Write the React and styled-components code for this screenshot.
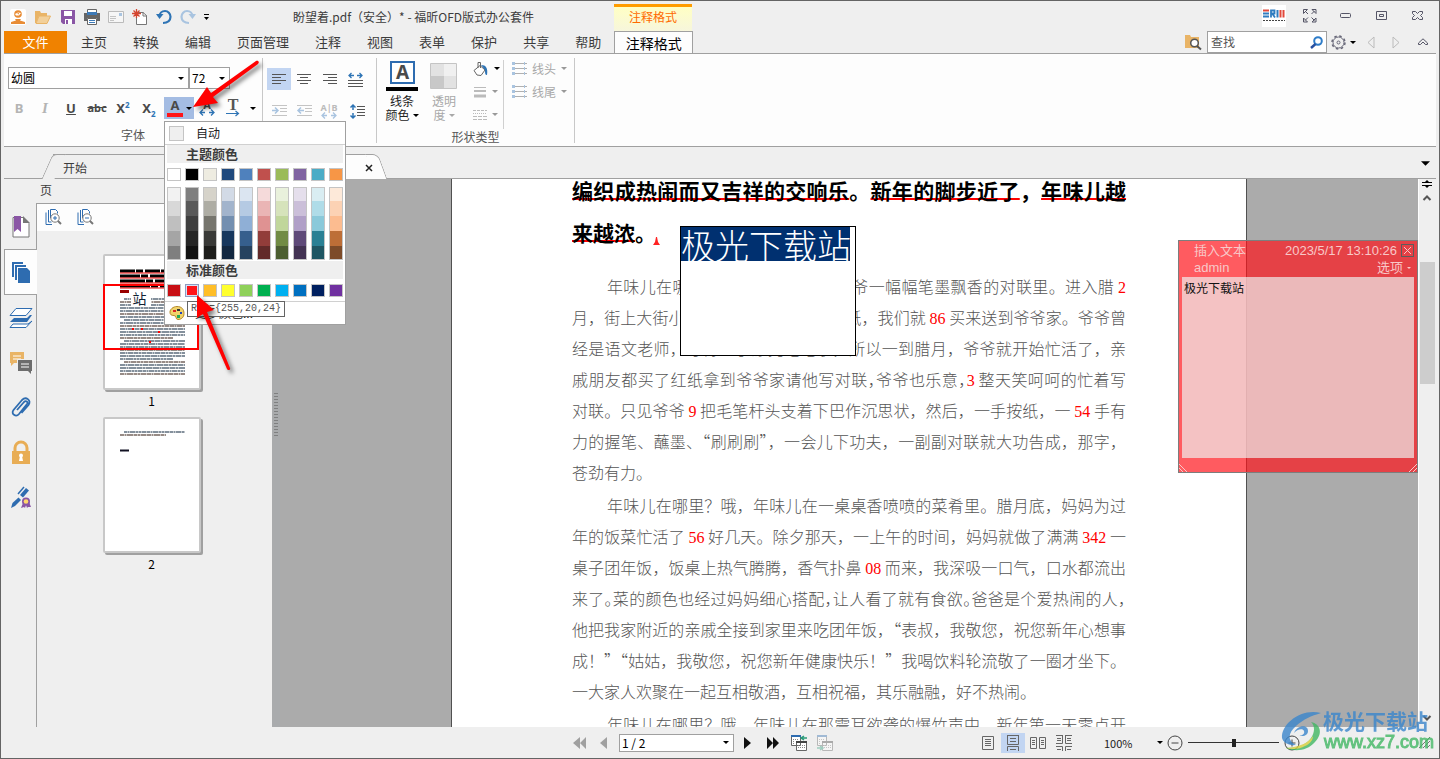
import React from "react";
import styled, { createGlobalStyle } from "styled-components";

const GlobalStyle = createGlobalStyle`
  * { box-sizing: border-box; }
  html, body { margin: 0; padding: 0; }
  body {
    font-family: "Noto Sans CJK SC", "Liberation Sans", sans-serif;
    font-size: 12px;
    line-height: 16px;
    color: #3c3c3c;
    background: #efefef;
    overflow: hidden;
  }
  button, input, select {
    font: inherit;
    color: inherit;
    margin: 0;
    padding: 0;
    border: none;
    border-radius: 0;
    background: none;
    outline: none;
  }
  svg { display: block; flex: none; overflow: visible; }
`;

/* ---------- window ---------- */

const Window = styled.div`
  position: relative;
  display: flex;
  flex-direction: column;
  height: 100vh;
  padding: 0 3px;
  border: 1px solid #646464;
  background: #efefef;
`;

const TitleBar = styled.header`
  display: flex;
  align-items: center;
  height: 30px;
`;

const QuickAccess = styled.div`
  display: flex;
  align-items: center;
  flex: 0 0 289px;
  padding: 2px 0 0 2px;
`;

const IconButton = styled.button`
  display: flex;
  align-items: center;
  justify-content: center;
  gap: 4px;
  width: ${(p) => p.$w || 24}px;
  height: ${(p) => p.$h || 22}px;
  background: ${(p) => (p.$on ? "#c2d5f2" : "none")};
`;

const Title = styled.h1`
  flex: 0 0 321px;
  margin: 0;
  padding-top: 2px;
  font-size: 12px;
  font-weight: 400;
  white-space: nowrap;
`;

const ContextTitle = styled.div`
  align-self: flex-end;
  width: 78px;
  height: 27px;
  border-top: 3px solid #ff9c00;
  background: linear-gradient(#ffffc4, #f7f6dc);
  color: #ff6a00;
  text-align: center;
  line-height: 20px;
`;

const Spacer = styled.div`
  flex: 1;
`;

const TabBar = styled.nav`
  display: flex;
  height: 22px;
`;

const FileTab = styled.button`
  width: 63px;
  margin-right: 1px;
  background: #f08200;
  color: #fff;
  font-size: 13px;
`;

const Tab = styled.button`
  padding: 0 13px;
  font-size: 13px;
`;

const ActiveTab = styled.button`
  position: relative;
  z-index: 1;
  width: 79px;
  height: 23px;
  border: 1px solid #a0a0a0;
  border-bottom: none;
  background: #fdfdfd;
  color: #000;
  font-size: 14px;
`;

const SearchBox = styled.div`
  display: flex;
  align-items: center;
  width: 120px;
  padding: 0 3px;
  border: 1px solid #a0a0a0;
  background: #fff;
`;

const SearchInput = styled.input`
  flex: 1;
  min-width: 0;
  &::placeholder { color: #555; opacity: 1; }
`;

/* ---------- ribbon ---------- */

const RibbonLift = styled.div`
  position: relative;
  z-index: 5;
`;

const Ribbon = styled.section`
  display: flex;
  height: 94px;
  padding: 4px 0 3px;
  border-top: 1px solid #a0a0a0;
  border-bottom: 1px solid #a0a0a0;
  background: #fdfdfd;
`;

const Group = styled.div`
  display: flex;
  flex-direction: column;
  width: ${(p) => p.$w}px;
  border-right: 1px solid #c8c8c8;
`;

const GroupLabel = styled.div`
  margin-top: auto;
  color: #555;
  text-align: center;
`;

const Row = styled.div`
  display: flex;
  align-items: ${(p) => p.$align || "center"};
  padding-left: ${(p) => p.$pad || 0}px;
  margin-top: ${(p) => p.$top || 0}px;
`;

const SelectWrap = styled.label`
  display: grid;
  align-items: center;
  width: ${(p) => p.$w}px;
  height: ${(p) => p.$h || 22}px;
  border: 1px solid #a0a0a0;
  background: #fff;
  color: #000;
  & > * { grid-area: 1 / 1; }
  & > svg { justify-self: end; margin-right: 4px; pointer-events: none; }
`;

const Select = styled.select`
  appearance: none;
  width: 100%;
  padding-left: 2px;
`;

const Letter = styled.button`
  width: 26px;
  height: 22px;
  color: ${(p) => (p.$off ? "#b4b4b4" : "#4a4a4a")};
  font-family: ${(p) => (p.$serif ? '"Liberation Serif", serif' : '"Noto Sans", sans-serif')};
  font-size: ${(p) => p.$size || 13}px;
  font-weight: 700;
  font-style: ${(p) => (p.$italic ? "italic" : "normal")};
  text-decoration: ${(p) => p.$line || "none"};
  sup, sub { font-size: 8px; line-height: 0; color: #2e74b5; }
`;

const ColorAnchor = styled.div`
  position: relative;
  width: 30px;
`;

const ColorButton = styled.button`
  display: flex;
  align-items: center;
  justify-content: center;
  gap: 3px;
  width: 30px;
  height: 22px;
  background: #a4bce3;
`;

const BigButton = styled.button`
  display: flex;
  flex-direction: column;
  align-items: center;
  width: 42px;
  color: ${(p) => (p.$off ? "#a8a8a8" : "#222")};
  line-height: 14px;
  svg { margin-bottom: 2px; }
  span { display: flex; align-items: center; gap: 3px; }
  span svg { margin: 0; }
`;

const SmallStack = styled.div`
  display: flex;
  flex-direction: column;
  width: ${(p) => p.$w}px;
  border-right: ${(p) => (p.$line ? "1px solid #d0d0d0" : "none")};
`;

const SmallButton = styled.button`
  display: flex;
  align-items: center;
  gap: 5px;
  height: 23px;
  padding: 0 0 6px 8px;
  color: #a8a8a8;
`;

/* ---------- colour menu ---------- */

const Menu = styled.div`
  position: absolute;
  top: 24px;
  left: 0;
  width: 182px;
  border: 1px solid #a0a0a0;
  background: #fff;
`;

const AutoRow = styled.button`
  display: flex;
  align-items: center;
  width: 100%;
  height: 23px;
  padding-left: 4px;
  border-bottom: 1px solid #d0d0d0;
  color: #222;
  gap: 12px;
`;

const MenuHead = styled.div`
  margin: 0 2px;
  padding-left: 19px;
  background: #efefef;
  font-size: 13px;
  font-weight: 700;
  line-height: 18px;
`;

const Swatches = styled.div`
  display: flex;
  gap: 4px;
  padding: ${(p) => p.$pad || "5px 2px 4px"};
`;

const Swatch = styled.button`
  width: ${(p) => p.$w || 14}px;
  height: ${(p) => p.$h || 13}px;
  border: 1px solid ${(p) => (p.$on ? "#8e9cc0" : "#c4c4c4")};
  box-shadow: ${(p) => (p.$on ? "inset 0 0 0 1px #d6e2f6" : "none")};
  background: ${(p) => p.$c};
`;

const Shades = styled.div`
  display: flex;
  flex-direction: column;
  width: 14px;
  border: 1px solid #c4c4c4;
`;

const Shade = styled.button`
  height: ${(p) => (p.$edge ? 13 : 15)}px;
  background: ${(p) => p.$c};
`;

const MoreRow = styled.button`
  display: flex;
  align-items: center;
  gap: 10px;
  width: 100%;
  height: 23px;
  padding-left: 4px;
  border-top: 1px solid #d0d0d0;
  color: #222;
`;

const Tooltip = styled.div`
  position: absolute;
  top: 179px;
  left: 22px;
  width: 98px;
  height: 16px;
  padding-left: 3px;
  border: 1px solid #646464;
  background: #fff;
  color: #555;
  font-family: "Liberation Mono", monospace;
  font-size: 10px;
  line-height: 14px;
  white-space: nowrap;
`;

/* ---------- document tabs ---------- */

const DocTabs = styled.div`
  display: flex;
  align-items: flex-end;
  height: 32px;
  padding-left: 49px;
  border-bottom: 1px solid #a0a0a0;
`;

const DocTab = styled.div`
  position: relative;
  display: flex;
  align-items: center;
  justify-content: space-between;
  width: ${(p) => p.$w}px;
  height: ${(p) => (p.$on ? 25 : 24)}px;
  margin-bottom: ${(p) => (p.$on ? -1 : 0)}px;
  padding: 2px 0 0 10px;
  border-top: 1px solid #a0a0a0;
  border-radius: 0 8px 0 0;
  background: ${(p) => (p.$on ? "#fdfdfd" : "#efefef")};
  &::before {
    content: "";
    position: absolute;
    top: -1px;
    left: -6px;
    width: 12px;
    height: 24px;
    border-top: 1px solid #a0a0a0;
    border-left: 1px solid #a0a0a0;
    border-radius: 5px 0 0 0;
    background: inherit;
    transform: skewX(-24deg);
  }
  &::after {
    content: "";
    position: absolute;
    top: -1px;
    right: -4px;
    width: 12px;
    height: ${(p) => (p.$on ? 25 : 24)}px;
    border-top: 1px solid #a0a0a0;
    border-right: 1px solid #a0a0a0;
    border-radius: 0 6px 0 0;
    background: inherit;
    transform: skewX(20deg);
  }
  & > * { position: relative; z-index: 1; }
`;

/* ---------- main area ---------- */

const Main = styled.main`
  display: flex;
  flex: 1;
  min-height: 0;
`;

const Rail = styled.nav`
  display: flex;
  flex-direction: column;
  width: 33px;
  padding-top: 25px;
`;

const RailButton = styled.button`
  position: relative;
  display: flex;
  align-items: center;
  justify-content: center;
  width: 33px;
  height: ${(p) => (p.$on ? 46 : 45)}px;
  border: 1px solid ${(p) => (p.$on ? "#a0a0a0" : "transparent")};
  border-right: none;
  background: ${(p) => (p.$on ? "#fdfdfd" : "none")};
`;

const Panel = styled.aside`
  display: flex;
  flex-direction: column;
  width: 235px;
`;

const PanelTitle = styled.div`
  height: 24px;
  padding: 3px 0 0 3px;
`;

const PanelBody = styled.div`
  flex: 1;
  margin-left: -1px;
  border-top: 1px solid #a0a0a0;
  border-left: 1px solid #a0a0a0;
`;

const PanelTools = styled.div`
  display: flex;
  gap: 8px;
  height: 27px;
  padding-left: 4px;
  background: #fdfdfd;
`;

const Thumbs = styled.div`
  display: flex;
  flex-direction: column;
  align-items: center;
  padding: 23px 6px 0 0;
`;

const Thumb = styled.figure`
  display: flex;
  flex-direction: column;
  align-items: center;
  height: 163px;
  margin: 0;
`;

const Sheet = styled.div`
  position: relative;
  width: 98px;
  height: 136px;
  border: 2px solid #c8c8c8;
  border-radius: 2px;
  background: #fff;
  box-shadow: 2px 2px 0 #a0a0a0;
`;

const SheetMark = styled.span`
  position: absolute;
  top: 33px;
  left: 26px;
  padding: 1px 4px 1px 2px;
  background: #fff;
  color: #123;
  font-size: 14px;
`;

const SheetView = styled.span`
  position: absolute;
  top: 28px;
  left: -2px;
  width: 96px;
  height: 66px;
  border: 2px solid #f00;
`;

const Caption = styled.figcaption`
  margin-top: 3px;
  color: #000;
`;

const Splitter = styled.div`
  display: flex;
  align-items: center;
  justify-content: center;
  width: 8px;
  padding-bottom: 76px;
  background: #a9abad;
`;

const Canvas = styled.div`
  position: relative;
  display: flex;
  justify-content: center;
  flex: 1;
  min-width: 0;
  overflow: hidden;
  background: #ababab;
`;

const Page = styled.article`
  flex: none;
  width: 796px;
  padding: 0 120px;
  border-left: 1px solid #505050;
  border-right: 1px solid #505050;
  background: #fff;
`;

const Heading = styled.h2`
  margin: -10px 0 18px;
  color: #000;
  font-size: 21px;
  font-weight: 700;
  line-height: 42px;
`;

const Para = styled.p`
  margin: 0 0 2px;
  color: #555;
  font-weight: 300;
  font-size: 16px;
  line-height: 31px;
`;

const Line = styled.span`
  display: block;
  height: ${(p) => (p.$head ? 42 : 31)}px;
  padding-left: ${(p) => (p.$first ? 35 : 0)}px;
  font-feature-settings: ${(p) => (p.$tight ? '"halt"' : "normal")};
  text-align: ${(p) => (p.$last ? "left" : "justify")};
  text-align-last: ${(p) => (p.$last ? "left" : "justify")};
`;

const Under = styled.u`
  text-decoration: underline #f00 2px;
  text-decoration-skip-ink: none;
  text-underline-offset: -1px;
`;

const Num = styled.b`
  color: #f00;
  font-family: "Liberation Serif", serif;
  font-weight: 400;
`;

const Caret = styled.svg`
  display: inline-block;
  margin-left: -3px;
  vertical-align: -4px;
`;

const TextBox = styled.div`
  position: absolute;
  top: 47px;
  left: 400px;
  width: 176px;
  height: 130px;
  border: 1px solid #000;
  background: #fff;
`;

const TextBoxInput = styled.input`
  display: block;
  width: 169px;
  height: 34px;
  background: #003070;
  color: #fff;
  font-size: 34px;
  font-weight: 300;
  line-height: 34px;
`;

const Note = styled.section`
  position: absolute;
  top: 61px;
  right: 0;
  display: flex;
  flex-direction: column;
  width: 240px;
  height: 233px;
  padding: 1px 3px 0;
  border: 1px solid #7d7d7d;
  background: rgba(255, 18, 24, 0.69);
  color: #f8c8c8;
`;

const NoteHead = styled.div`
  display: flex;
  align-items: center;
  justify-content: space-between;
  height: 17px;
  padding-left: 12px;
  font-family: "Liberation Sans", "Noto Sans CJK SC", sans-serif;
  font-size: 13px;
`;

const NoteMeta = styled.span`
  display: flex;
  align-items: center;
  gap: 4px;
  padding-right: ${(p) => p.$pad || 0}px;
`;

const NoteClose = styled.button`
  display: flex;
  align-items: center;
  justify-content: center;
  width: 13px;
  height: 13px;
  border: 1px solid #5c5c5c;
`;

const NoteText = styled.div`
  flex: 1;
  margin: 1px 0 0;
  padding: 3px 2px;
  background: rgba(238, 248, 246, 0.66);
  color: #111;
`;

const NoteFoot = styled.div`
  display: flex;
  align-items: flex-end;
  justify-content: space-between;
  height: 14px;
  margin: 0 -3px;
`;

const ScrollBar = styled.div`
  display: flex;
  flex-direction: column;
  align-items: center;
  width: 18px;
  padding-right: 1px;
  border-left: 1px solid #fdfdfd;
`;

const ScrollThumb = styled.div`
  width: 15px;
  height: 122px;
  margin: 54px 0 auto;
  background: #cdcdcd;
`;

/* ---------- status bar ---------- */

const StatusBar = styled.footer`
  display: flex;
  align-items: center;
  height: 31px;
  color: #222;
`;

const StatusLeft = styled.div`
  display: flex;
  align-items: center;
  padding-left: 563px;
`;

const Zoom = styled.input.attrs({ type: "range" })`
  appearance: none;
  width: 91px;
  height: 16px;
  margin: 0 4px;
  background: linear-gradient(#333, #333) center / 100% 1px no-repeat;
  &::-webkit-slider-thumb {
    appearance: none;
    width: 4px;
    height: 8px;
    background: #222;
  }
`;

const Percent = styled.span`
  width: 50px;
  font-size: 11px;
`;

/* ---------- overlays ---------- */

const Pointer = styled.svg`
  position: absolute;
  z-index: 8;
  top: ${(p) => p.$y}px;
  left: ${(p) => p.$x}px;
  pointer-events: none;
  filter: drop-shadow(3px 3px 2px rgba(0, 0, 0, 0.5));
`;

const Brand = styled.div`
  position: absolute;
  z-index: 9;
  right: 5px;
  bottom: 5px;
  display: flex;
  align-items: center;
  opacity: 0.8;
  pointer-events: none;
`;

const BrandName = styled.div`
  color: #3a86cc;
  font-size: 21px;
  font-weight: 700;
  line-height: 22px;
  small {
    display: block;
    padding-left: 1px;
    color: #41b763;
    font-family: "Liberation Sans", sans-serif;
    font-size: 18px;
    font-weight: 400;
    -webkit-text-stroke: 1px #41b763;
  }
`;

/* ---------- small drawings ---------- */

const Down = ({ c = "#000", w = 6 }) => (
  <svg width={w} height={Math.ceil(w / 2)} viewBox="0 0 6 3" fill={c}><path d="M0 0h6L3 3z" /></svg>
);

const S = ({ w = 16, h, box, children, ...rest }) => (
  <svg width={w} height={h || w} viewBox={box || `0 0 ${w} ${h || w}`} fill="none" {...rest}>{children}</svg>
);

const AppIcon = () => (
  <S><rect width="16" height="16" rx="2" fill="#fff" />
    <circle cx="8" cy="5" r="3.800" fill="#e88c35" />
    <path d="M5 5l3-1.500 3 .500-2 2.500H6z" fill="#fff" />
    <path d="M7 4.500l2-.500v1.500z" fill="#e88c35" />
    <path d="M5 10h6l-1 1.500 5 1.500V15H1v-2l5-1.500z" fill="#e88c35" /></S>
);
const OpenIcon = () => (
  <S><path d="M0 2h5l1 2h6v3H4L1 14H0z" fill="#e9b466" /><path d="M4 7h11.500L12 14.500H1z" fill="#f2d09a" stroke="#e9b466" /></S>
);
const SaveIcon = () => (
  <S w={15}><path d="M0 0h14v14H2l-2-2z" fill="#8a56a5" /><path d="M3 1h8v5H3zM4 9h7v5H4z" fill="#fff" /><path d="M5 10h2v4H5z" fill="#8a56a5" /></S>
);
const PrintIcon = () => (
  <S><path d="M3.500 4V.500h9V4" stroke="#666" fill="#fff" /><path d="M0 4h16v8h-3V9H3v3H0z" fill="#666" /><path d="M3 3h10v3H3z" fill="#3d7ab8" /><path d="M3.500 9.500h9v6h-9z" fill="#fff" stroke="#666" /><path d="M5 11.500h6M5 13.500h6" stroke="#3d7ab8" /></S>
);
const MailIcon = () => (
  <S h={12} box="0 0 16 12"><path d="M.500.500h15v11H.500z" stroke="#bbb" fill="#f6f6f6" /><path d="M2 5.500h6M2 7.500h6M2 9.500h4" stroke="#c4c4c4" /><path d="M11 2h3v3h-3z" fill="#a9c4e0" /></S>
);
const NewIcon = () => (
  <S><path d="M6 3.500h5l3.500 3V15.500h-10V9" stroke="#777" fill="#fff" /><path d="M11 3v4h4" stroke="#777" /><path d="M4.500 0v9M0 4.500h9M1.500 1.500l6 6M7.500 1.500l-6 6" stroke="#d5452f" strokeWidth="1.300" /></S>
);
const UndoIcon = ({ c = "#2e74b5", flip }) => (
  <S transform={flip ? "scale(-1 1)" : undefined}><path d="M3.500 7.500C3.500 4 6 2 9 2s5.500 2.500 5.500 5.800S12 14 7 14" stroke={c} strokeWidth="2.200" /><path d="M0 5h7.500L3.500 10z" fill={c} /></S>
);
const FullIcon = () => (
  <S w={14} stroke="#556"><path d="M.500.500h4L.500 4.500zM9 .500h4v4zM.500 9l4 4h-4zM13 9v4H9zM2 2l3 3M11.500 2l-3 3M2 11.500l3-3M11.500 11.500l-3-3" /></S>
);
const EriiiIcon = () => (
  <S w={24} h={22}><path d="M0 0h24v22H0z" fill="#fff" />
    <path d="M1 5.500h6" stroke="#e1483a" strokeWidth="2" /><path d="M1 8.500h6M1 11.500h6" stroke="#2f7cc0" strokeWidth="2" />
    <path d="M9 12.500v-7h3.500v3H9M10.500 9l2.500 3.500" stroke="#2f7cc0" strokeWidth="1.800" />
    <path d="M15.500 5v7.500" stroke="#2f7cc0" strokeWidth="2" /><path d="M18.500 5v7.500M21.500 5v7.500" stroke="#e1483a" strokeWidth="2" />
    <path d="M1 15.500h22" stroke="#444" strokeDasharray="2 1" /></S>
);
const Gear = () => (
  <S w={15}><circle cx="7.500" cy="7.500" r="5.500" stroke="#667" /><circle cx="7.500" cy="7.500" r="6.500" stroke="#667" strokeWidth="1.500" strokeDasharray="2.500 2.600" /><circle cx="7.500" cy="7.500" r="1.500" stroke="#667" /></S>
);

const alignLines = {
  left: [[0, 14], [0, 9], [0, 14], [0, 9]],
  center: [[0, 14], [3, 11], [0, 14], [3, 11]],
  right: [[0, 14], [5, 14], [0, 14], [5, 14]],
};
const AlignIcon = ({ kind }) => (
  <S w={14} h={12}>{alignLines[kind].map(([a, b], i) => <path key={i} d={`M${a} ${i * 3 + 1.5}H${b}`} stroke="#555" />)}</S>
);
const IndentIcon = ({ back }) => (
  <S w={15} h={12}><path d="M0 .500h15M8 3.500h7M8 6.500h7M0 10.500h15" stroke="#c4c4c4" />
    <path d={back ? "M7 5.500H1M4 2.500L1 5.500l3 3" : "M0 5.500h6M3 2.500l3 3-3 3"} stroke="#a9c4e0" strokeWidth="1.500" /></S>
);
const SpaceIcon = () => (
  <S w={15} h={15}><path d="M1 3.500h5M9 3.500h5M3.500 1L1 3.500 3.500 6M11.500 1L14 3.500 11.500 6" stroke="#2e74b5" strokeWidth="1.300" /><path d="M0 8.500h15M0 11.500h15M0 14.500h15" stroke="#555" /></S>
);
const LineHeightIcon = () => (
  <S w={15} h={15}><path d="M3 1v5M3 9v5M.500 3.500L3 1l2.500 2.500M.500 11.500L3 14l2.500-2.500" stroke="#2e74b5" strokeWidth="1.500" /><path d="M7 2.500h8M7 5.500h8M7 8.500h8M7 11.500h8" stroke="#555" /></S>
);
const Arrows = ({ c = "#2e74b5" }) => <path d="M1 13.500h5M10 13.500h5M4 10.500l-3 3 3 3M12 10.500l3 3-3 3" stroke={c} strokeWidth="1.300" />;
const svgText = { fontFamily: "Noto Sans", fontWeight: 700 };

const LetterSpace = () => (
  <S h={18}><text x="8" y="10" textAnchor="middle" fontSize="11" fill="#555" {...svgText}>A</text><Arrows /></S>
);
const ABIcon = () => (
  <S h={18}><text x="8" y="9" textAnchor="middle" fontSize="9" fill="#bbb" {...svgText}>A|B</text><Arrows c="#a9c4e0" /></S>
);
const TextDir = () => (
  <S h={18}><text x="7" y="11" textAnchor="middle" fontSize="16" fill="#555" fontFamily="Liberation Serif" fontWeight="700">T</text><path d="M0 14.500h12M9.500 12l3 2.500-3 2.500" stroke="#2e74b5" strokeWidth="1.200" /></S>
);
const LineColorIcon = () => (
  <S w={32} h={32}><path d="M5 2h23v21H5z" stroke="#2e6cb0" strokeWidth="2" fill="#fff" />
    <text x="16.500" y="19" textAnchor="middle" fontSize="19" fill="#4a4a4a" {...svgText}>A</text><path d="M0 27h32v4H0z" fill="#000" /></S>
);
const OpacityIcon = () => (
  <S w={28} h={32}><path d="M.500 3.500h26v25H.500z" fill="#f0f0f0" stroke="#c4c4c4" /><path d="M1 4h13v12H1zM14 16h12v12H14z" fill="#e2e2e2" /><path d="M1 16h13v12H1z" fill="#c8c8c8" /></S>
);
const BucketIcon = () => (
  <S><path d="M5 7V1.500h2.500V7M1 9.500l6-5 5 4.500-4 5.500-4-.500z" stroke="#666" fill="#fff" /><path d="M8 4c5 0 7 3 6 10-2 0-2-2-2-5z" fill="#2e74b5" /></S>
);
const WeightIcon = () => <S w={14} h={12}><path d="M1 1.500h12" stroke="#bbb" /><path d="M1 5h12" stroke="#bbb" strokeWidth="2" /><path d="M1 10h12" stroke="#bbb" strokeWidth="3" /></S>;
const DashIcon = () => <S w={14} h={12}><path d="M0 1.500h14" stroke="#bbb" strokeDasharray="3 1" /><path d="M0 4.500h14" stroke="#bbb" strokeDasharray="1 1" /><path d="M0 7.500h14M0 10.500h14" stroke="#bbb" strokeDasharray="4 1" /></S>;
const EndsIcon = () => (
  <S w={15} h={13}>{[1.5, 6.5, 11.5].map((y) => <React.Fragment key={y}><path d={`M2 ${y}H15`} stroke="#b0b0b0" /><path d={`M0 ${y - 1.5}h3v3H0z`} fill="#a9c4e0" /></React.Fragment>)}<path d="M12.500 0v3M12.500 5v3M12.500 10v3" stroke="#a9c4e0" /></S>
);

const BookmarkIcon = () => (
  <S w={18} h={22}><path d="M1 1.500h10l6 6V21H1z" fill="#fff" stroke="#777" /><path d="M11 0l7 7h-7z" fill="#777" /><path d="M2 0h7v16l-3.500-3L2 16z" fill="#8a56a5" /></S>
);
const PagesIcon = () => (
  <S w={20} h={22}><path d="M1 1h11v2H3v13H1z" fill="#2e6cb0" /><path d="M4 4h11v2H6v13H4z" fill="#2e6cb0" /><path d="M7 7h9l3 3v12H7z" fill="#2e6cb0" /></S>
);
const LayersIcon = () => (
  <S w={24} h={22}><path d="M7 1.500h16l-6 7H1z" fill="#fff" stroke="#2e6cb0" /><path d="M1 15l4-4h13l3-3h2l-5 7z" fill="#2e6cb0" /><path d="M4 17l-3 3.500h16l6-6.500-4 3z" fill="#fff" stroke="#2e6cb0" /></S>
);
const CommentsIcon = () => (
  <S w={22} h={22}><path d="M0 0h14v11H4l-3 3v-3H0z" fill="#e9b466" /><path d="M3 4h8M3 7h8" stroke="#fff" /><path d="M8 8h14v11h-1v3l-3-3H8z" fill="#6d6d6d" /><path d="M7.500 11V7.500H15" stroke="#efefef" /><path d="M11 12h8M11 15h8" stroke="#fff" /></S>
);
const ClipIcon = () => (
  <S w={20} h={21}><path d="M6 13l7-8c2-2 4.500 0 3 2L8 17c-3 3.500-8.500 0-5.500-4L11 3c4-4 9.500 0 6.500 5l-7 8" stroke="#2e6cb0" strokeWidth="1.800" /></S>
);
const LockIcon = () => (
  <S w={20} h={23}><path d="M4 10V7a6 6 0 0 1 12 0v3" stroke="#e8ad55" strokeWidth="3" /><path d="M1 10h18v13H1z" fill="#e8ad55" /><circle cx="10" cy="14.500" r="2" fill="#fff" /><path d="M9 15h2l1 5H8z" fill="#fff" /></S>
);
const SignIcon = () => (
  <S w={20} h={22}><path d="M0 21l1.500-5 6-5.500 2.500 2.500-6 6z" fill="#2e6cb0" /><path d="M9 8l6-7 3 2.500-6 7z" fill="#2e6cb0" /><path d="M7 7l6-7" stroke="#2e6cb0" strokeWidth="1.500" /><path d="M12 16l-2 5 3-1 1 1 1-3 1 3 1-1h3l-2-5z" fill="#8a56a5" /><circle cx="15" cy="14.500" r="4" fill="#8a56a5" /><circle cx="15" cy="14.500" r="2.300" fill="#ffd76b" /></S>
);
const PageZoomIcon = ({ plus }) => (
  <S><path d="M1 3.500V15.500h6M3.500 1v12h3M5.500 9V.500h5l2 2v2" stroke="#2e6cb0" /><circle cx="10" cy="9" r="4.200" stroke="#777" fill="#fff" /><path d="M13 12l3 3" stroke="#777" strokeWidth="2" /><path d={plus ? "M8 9h4M10 7v4" : "M8 9h4"} stroke="#2e6cb0" /></S>
);
const Palette = () => (
  <S><path d="M8 1.500c5 0 7 3 7 7s-3 6-6 6-1-4-4-4-4-1-4-3.500 3-5.500 7-5.500z" fill="#f1d36b" stroke="#b58a2a" /><path d="M4 5h3v2H4z" fill="#d22" /><path d="M8 4h3v2H8z" fill="#333" /><path d="M11 7h2v2h-2z" fill="#24b" /><path d="M8 10h3v3H8z" fill="#2a5" /></S>
);

const TableSwap = ({ off }) => (
  <S opacity={off ? 0.4 : 1}><path d="M.500.500h9v10h-9zM5.500 6.500h10v9h-10z" fill="#fff" stroke="#666" /><path d="M0 1h10" stroke="#2e6cb0" strokeWidth="2" /><path d="M5 7h11" stroke="#444" strokeWidth="2" /><path d="M7 10.500h7M7 12.500h7M2 4.500h6M2 6.500h2M2 8.500h2" stroke="#888" strokeDasharray="1 1" /><path d={off ? "M0 13h5M3 11l3 2-3 2" : "M16 3h-5M13 1l-3 2 3 2"} stroke="#2a9a78" strokeWidth="1.500" /></S>
);

const ViewIcon = ({ kind }) => {
  const shapes = {
    single: "M2.5 1.500h11v13h-11zM5 4.500h6M5 6.500h6M5 8.500h6M5 10.500h6",
    scroll: "M2.5 0v9.500h11V0M2.500.500h11M5 3.500h6M5 6.500h6M2.500 16v-4.500h11V16M5 14.500h6",
    facing: "M.5 2.500h6v11h-6zM9.500 2.500h6v11h-6zM2 5.500h3M2 7.500h3M2 9.500h3M11 5.500h3M11 7.500h3M11 9.500h3",
    facingScroll: "M6.500 0v8.500H0M9.500 0v8.500H16M6.500 16V11.500H0M9.500 16V11.500H16M0 .500h6M10 .500h6M1 3.500h4M11 3.500h4M1 5.500h4M11 5.500h4M1 14.500h4M11 14.500h4",
  };
  return <S><path d={shapes[kind]} stroke="#666" /></S>;
};

const ThumbText = ({ full }) => {
  const rows = full ? Array.from({ length: 26 }, (_, i) => 43 + i * 3) : [13, 16];
  return (
    <S w={94} h={132}>
      {full && [15, 20, 25, 30].map((y) => <g key={y}><path d={`M15 ${y}H80`} stroke="#000" strokeWidth="3" strokeDasharray={`${y} 1 7 2`} /><path d={`M15 ${y + 2}H80`} stroke="#e00" /></g>)}
      {full && <path d="M15 35.500h9" stroke="#900" strokeWidth="3" />}
      {rows.map((y, i) => (
        <path key={y} d={`M${i % 7 === 0 ? 19 : 15} ${y}H${full ? (i % 7 === 6 ? 68 : 80) : 80 - i * 19}`} stroke={i % 4 === 1 ? "#75655f" : "#5c6c7c"} strokeWidth="1.500" strokeDasharray={`${3 + (i % 4)} .500 2 .500 ${5 + (i % 3)} .500`} />
      ))}
      {full && <path d="M27 73h2M36 73h2M53 76h2M44 86h2" stroke="#f00" strokeWidth="2" />}
      {full && <path d="M26 48h4" stroke="#123" />}
      {!full && <path d="M15 31.500h9" stroke="#112" strokeWidth="2" />}
    </S>
  );
};

/* ---------- data ---------- */

const tabs = ["主页", "转换", "编辑", "页面管理", "注释", "视图", "表单", "保护", "共享", "帮助"];

const theme = ["#ffffff", "#000000", "#eeece1", "#1f497d", "#4f81bd", "#c0504d", "#9bbb59", "#8064a2", "#4bacc6", "#f79646"];

const shades = [
  ["#f2f2f2", "#d8d8d8", "#bfbfbf", "#a5a5a5", "#7f7f7f"],
  ["#7f7f7f", "#595959", "#3f3f3f", "#262626", "#121212"],
  ["#d6d3ca", "#aeada4", "#76756d", "#3a3a38", "#1d1d1b"],
  ["#d2dae6", "#a2b4cc", "#738fb0", "#17375d", "#122740"],
  ["#dbe5f1", "#b5cae3", "#8fafd6", "#365f8d", "#26425f"],
  ["#f5dada", "#eab5b5", "#df9292", "#923d3a", "#622a29"],
  ["#e9f1dc", "#d6e3bb", "#c0d69b", "#718b44", "#4c5e31"],
  ["#e5dfec", "#cbbfd9", "#b09fc7", "#5f4a79", "#433353"],
  ["#d9edf2", "#afdce8", "#8ac9da", "#2a8094", "#1f5663"],
  ["#fde9d9", "#fcd2b4", "#fcbc90", "#bd6e37", "#7d4b29"],
];

const standard = ["#c80f14", "#ff1418", "#ffbe28", "#ffff2e", "#8fd15a", "#00b050", "#00b0f0", "#0070c0", "#002060", "#7030a0"];

const ColorMenu = () => (
  <Menu>
    <AutoRow><Swatch as="span" $w={15} $h={15} $c="#efefef" />自动</AutoRow>
    <MenuHead>主题颜色</MenuHead>
    <Swatches $pad="5px 2px 6px">{theme.map((c) => <Swatch key={c} $c={c} aria-label={c} />)}</Swatches>
    <Swatches $pad="0 2px 1px">
      {shades.map((col, i) => (
        <Shades key={i}>{col.map((c, j) => <Shade key={j} $c={c} $edge={j === 0 || j === 4} aria-label={c} />)}</Shades>
      ))}
    </Swatches>
    <MenuHead>标准颜色</MenuHead>
    <Swatches>{standard.map((c, i) => <Swatch key={c} $c={c} $on={i === 1} aria-label={c} />)}</Swatches>
    <MoreRow><Palette />更多颜色...</MoreRow>
    <Tooltip>RGB={"{255,20,24}"}</Tooltip>
  </Menu>
);

const FontGroup = () => (
  <Group $w={259}>
    <Row $pad={4} $top={9}>
      <SelectWrap $w={181}><Select aria-label="字体"><option>幼圆</option></Select><Down /></SelectWrap>
      <SelectWrap $w={41}><Select aria-label="字号"><option>72</option></Select><Down /></SelectWrap>
    </Row>
    <Row $pad={2} $top={8}>
      <Letter $off>B</Letter>
      <Letter $off $italic $serif $size={15}>I</Letter>
      <Letter $line="underline">U</Letter>
      <Letter $line="line-through" $size={11}>abc</Letter>
      <Letter>X<sup>2</sup></Letter>
      <Letter>X<sub>2</sub></Letter>
      <Row $pad={2}>
        <ColorAnchor>
          <ColorButton aria-label="字体颜色">
            <S h={18}><text x="8" y="11" textAnchor="middle" fontSize="13" fill="#4a4a4a" {...svgText}>A</text><path d="M0 14h16v4H0z" fill="#ff1418" /></S>
            <Down />
          </ColorButton>
          <ColorMenu />
        </ColorAnchor>
      </Row>
      <IconButton $w={26} aria-label="字间距"><LetterSpace /></IconButton>
      <IconButton $w={28} aria-label="文字方向"><TextDir /></IconButton>
      <IconButton $w={10} aria-label="更多文字方向"><Down /></IconButton>
    </Row>
    <GroupLabel>字体</GroupLabel>
  </Group>
);

const ParagraphGroup = () => (
  <Group $w={114}>
    <Row $pad={4} $top={10}>
      <IconButton $on aria-label="左对齐"><AlignIcon kind="left" /></IconButton>
      <IconButton $w={26} aria-label="居中"><AlignIcon kind="center" /></IconButton>
      <IconButton $w={26} aria-label="右对齐"><AlignIcon kind="right" /></IconButton>
      <IconButton aria-label="字符缩放"><SpaceIcon /></IconButton>
    </Row>
    <Row $pad={4} $top={10}>
      <IconButton aria-label="增加缩进"><IndentIcon /></IconButton>
      <IconButton $w={26} aria-label="减少缩进"><IndentIcon back /></IconButton>
      <IconButton aria-label="字符间距"><ABIcon /></IconButton>
      <IconButton $w={32} aria-label="行距"><LineHeightIcon /></IconButton>
    </Row>
    <GroupLabel>段落</GroupLabel>
  </Group>
);

const ShapeGroup = () => (
  <Group $w={198}>
    <Row $pad={4} $top={2} $align="flex-start">
      <BigButton><LineColorIcon />线条<span>颜色<Down /></span></BigButton>
      <BigButton $off><OpacityIcon />透明<span>度<Down c="#a8a8a8" /></span></BigButton>
      <SmallStack $w={39} $line>
        <SmallButton aria-label="填充"><BucketIcon /><Down /></SmallButton>
        <SmallButton aria-label="线宽"><WeightIcon /><Down c="#999" /></SmallButton>
        <SmallButton aria-label="线型"><DashIcon /><Down c="#999" /></SmallButton>
      </SmallStack>
      <SmallStack $w={70}>
        <SmallButton><EndsIcon />线头<Down c="#999" /></SmallButton>
        <SmallButton><EndsIcon />线尾<Down c="#999" /></SmallButton>
      </SmallStack>
    </Row>
    <GroupLabel>形状类型</GroupLabel>
  </Group>
);

const Document = () => (
  <Page>
    <Heading>
      <Line $head><Under>编织成热闹而又吉祥的交响乐</Under>。<Under>新年的脚步近了</Under>，<Under>年味儿越</Under></Line>
      <Line $head $last><Under>来越浓</Under>。<Caret width="7" height="8" viewBox="0 0 7 8"><path d="M3 0h1l1 5 2 3H0l2-3z" fill="#f22" /></Caret></Line>
    </Heading>
    <Para>
      <Line $first>年味儿在哪里？哦，年味儿就在爷爷一幅幅笔墨飘香的对联里。进入腊 <Num>2</Num></Line>
      <Line>月，街上大街小巷都摆满了写对联的红纸，我们就 <Num>86</Num> 买来送到爷爷家。爷爷曾</Line>
      <Line>经是语文老师，写得一手漂亮毛笔字，所以一到腊月，爷爷就开始忙活了，亲</Line>
      <Line $tight>戚朋友都买了红纸拿到爷爷家请他写对联，爷爷也乐意，<Num>3</Num> 整天笑呵呵的忙着写</Line>
      <Line>对联。只见爷爷 <Num>9</Num> 把毛笔杆头支着下巴作沉思状，然后，一手按纸，一 <Num>54</Num> 手有</Line>
      <Line>力的握笔、蘸墨、“刷刷刷”，一会儿下功夫，一副副对联就大功告成，那字，</Line>
      <Line $last>苍劲有力。</Line>
    </Para>
    <Para>
      <Line $first>年味儿在哪里？哦，年味儿在一桌桌香喷喷的菜肴里。腊月底，妈妈为过</Line>
      <Line>年的饭菜忙活了 <Num>56</Num> 好几天。除夕那天，一上午的时间，妈妈就做了满满 <Num>342</Num> 一</Line>
      <Line>桌子团年饭，饭桌上热气腾腾，香气扑鼻 <Num>08</Num> 而来，我深吸一口气，口水都流出</Line>
      <Line $tight>来了。菜的颜色也经过妈妈细心搭配，让人看了就有食欲。爸爸是个爱热闹的人，</Line>
      <Line>他把我家附近的亲戚全接到家里来吃团年饭，“表叔，我敬您，祝您新年心想事</Line>
      <Line>成！”“姑姑，我敬您，祝您新年健康快乐！”我喝饮料轮流敬了一圈才坐下。</Line>
      <Line $last>一大家人欢聚在一起互相敬酒，互相祝福，其乐融融，好不热闹。</Line>
    </Para>
    <Para>
      <Line $first>年味儿在哪里？哦，年味儿在那震耳欲聋的爆竹声中。新年第一天零点开</Line>
    </Para>
  </Page>
);

const rail = [
  ["书签", BookmarkIcon], ["页面", PagesIcon], ["图层", LayersIcon], ["注释", CommentsIcon],
  ["附件", ClipIcon], ["安全", LockIcon], ["签名", SignIcon],
];

export default function App() {
  return (
    <Window lang="zh-CN">
      <GlobalStyle />
      <TitleBar>
        <QuickAccess>
          <IconButton aria-label="应用"><AppIcon /></IconButton>
          <IconButton $w={26} aria-label="打开"><OpenIcon /></IconButton>
          <IconButton aria-label="保存"><SaveIcon /></IconButton>
          <IconButton aria-label="打印"><PrintIcon /></IconButton>
          <IconButton aria-label="邮件"><MailIcon /></IconButton>
          <IconButton aria-label="新建"><NewIcon /></IconButton>
          <IconButton aria-label="撤销"><UndoIcon /></IconButton>
          <IconButton aria-label="重做"><UndoIcon c="#a9c4e0" flip /></IconButton>
          <IconButton $w={12} aria-label="自定义"><S w={5} h={7}><path d="M0 .500h5" stroke="#000" /><path d="M0 3h5L2.500 6z" fill="#000" /></S></IconButton>
        </QuickAccess>
        <Title>盼望着.pdf（安全）* - 福昕OFD版式办公套件</Title>
        <ContextTitle>注释格式</ContextTitle>
        <Spacer />
        <IconButton $w={36} aria-label="主页"><EriiiIcon /></IconButton>
        <IconButton $w={36} aria-label="全屏"><FullIcon /></IconButton>
        <IconButton $w={36} aria-label="最小化"><S w={12} h={6}><rect x=".5" y=".5" width="10" height="4" rx="1" stroke="#556" /></S></IconButton>
        <IconButton $w={36} aria-label="还原"><S w={12} h={10}><path d="M.500.500h10v8H.500zM3.500 3.500h4v2h-4z" stroke="#556" /></S></IconButton>
        <IconButton $w={36} aria-label="关闭"><S w={12} h={10}><path d="M.500.500h3l2 2 2-2h3v2l-2 2 2 2v2h-3l-2-2-2 2h-3v-2l2-2-2-2z" stroke="#556" /></S></IconButton>
      </TitleBar>

      <TabBar>
        <FileTab>文件</FileTab>
        {tabs.map((t) => <Tab key={t}>{t}</Tab>)}
        <ActiveTab>注释格式</ActiveTab>
        <Spacer />
        <IconButton $w={28} aria-label="查找文件夹"><S><path d="M0 1h5l1 2h8v11H0z" fill="#e9b466" /><circle cx="9.500" cy="9" r="3.800" stroke="#555" strokeWidth="1.500" fill="#fff" /><path d="M12 12l4 3.500" stroke="#555" strokeWidth="2" /></S></IconButton>
        <SearchBox>
          <SearchInput placeholder="查找" aria-label="查找" />
          <IconButton $w={14} aria-label="搜索"><S w={13}><circle cx="8" cy="5" r="3.800" stroke="#2e7cc8" strokeWidth="2" /><path d="M5.500 8L1 12" stroke="#2850a0" strokeWidth="2.500" /></S></IconButton>
        </SearchBox>
        <IconButton $w={32} aria-label="设置"><Gear /><Down /></IconButton>
        <IconButton aria-label="后退"><S w={8} h={13}><path d="M7 1v11L1 6.500z" stroke="#bbb" /></S></IconButton>
        <IconButton $w={26} aria-label="前进"><S w={8} h={13}><path d="M1 1v11l6-5.500z" stroke="#bbb" /></S></IconButton>
        <IconButton $w={27} aria-label="折叠功能区"><S w={10} h={8}><path d="M.500 5L5 .800 9.500 5v1.500h-2L5 4 2.500 6.500h-2z" stroke="#556" /></S></IconButton>
      </TabBar>

      <RibbonLift>
        <Ribbon>
          <FontGroup />
          <ParagraphGroup />
          <ShapeGroup />
        </Ribbon>
      </RibbonLift>

      <DocTabs>
        <DocTab $w={146}><span>开始</span></DocTab>
        <DocTab $w={180} $on>
          <span>盼望着.pdf</span>
          <IconButton $w={20} aria-label="关闭标签"><S w={8}><path d="M1 1l6 6M7 1L1 7" stroke="#222" strokeWidth="1.500" /></S></IconButton>
        </DocTab>
        <Spacer />
        <IconButton $w={22} $h={30} aria-label="标签列表"><Down w={9} /></IconButton>
      </DocTabs>

      <Main>
        <Rail>
          {rail.map(([name, Icon], i) => <RailButton key={name} $on={i === 1} aria-label={name}><Icon /></RailButton>)}
        </Rail>
        <Panel>
          <PanelTitle>页</PanelTitle>
          <PanelBody>
            <PanelTools>
              <IconButton $h={26} aria-label="放大缩略图"><PageZoomIcon plus /></IconButton>
              <IconButton $h={26} aria-label="缩小缩略图"><PageZoomIcon /></IconButton>
            </PanelTools>
            <Thumbs>
              <Thumb><Sheet><ThumbText full /><SheetMark>站</SheetMark><SheetView /></Sheet><Caption>1</Caption></Thumb>
              <Thumb><Sheet><ThumbText /></Sheet><Caption>2</Caption></Thumb>
            </Thumbs>
          </PanelBody>
        </Panel>
        <Splitter><S w={4} h={45}><path d="M1 0v45M3 0v45" stroke="#555" strokeDasharray="1 2" /></S></Splitter>
        <Canvas>
          <Document />
          <TextBox><TextBoxInput defaultValue="极光下载站" aria-label="文本框" /></TextBox>
          <Note>
            <NoteHead><span>插入文本</span><NoteMeta>2023/5/17 13:10:26<NoteClose aria-label="关闭批注"><S w={9}><path d="M1 1l7 7M8 1L1 8" stroke="#f8c8c8" /></S></NoteClose></NoteMeta></NoteHead>
            <NoteHead><span>admin</span><NoteMeta $pad={3}>选项<Down c="#f8c8c8" w={4} /></NoteMeta></NoteHead>
            <NoteText>极光下载站</NoteText>
            <NoteFoot>
              <S w={8}><path d="M0 0l8 8M0 4l4 4" stroke="#f8c8c8" /></S>
              <S w={8}><path d="M8 0L0 8M8 4L4 8" stroke="#f8c8c8" /></S>
            </NoteFoot>
          </Note>
        </Canvas>
        <ScrollBar>
          <S w={12} h={29}><path d="M1 3.500h10M1 6.500h10" stroke="#000" /><path d="M4 3l2-2 2 2zM4 7h4L6 9z" fill="#000" /><path d="M2.500 21L6 17.500 9.500 21" stroke="#555" strokeWidth="2" /></S>
          <ScrollThumb />
          <S w={12} h={16}><path d="M2.500 5L6 8.500 9.500 5" stroke="#555" strokeWidth="2" /></S>
        </ScrollBar>
      </Main>

      <StatusBar>
        <StatusLeft>
          <IconButton $w={26} aria-label="第一页"><S w={14} h={12}><path d="M7 0v12L0 6zM13 0v12L7 6z" fill="#a0a0a0" /></S></IconButton>
          <IconButton $w={22} aria-label="上一页"><S w={8} h={12}><path d="M7 0v12L0 6z" fill="#a0a0a0" /></S></IconButton>
          <Row $pad={4}><SelectWrap $w={115} $h={18}><Select aria-label="页码"><option>1 / 2</option></Select><Down /></SelectWrap></Row>
          <IconButton $w={26} aria-label="下一页"><S w={8} h={12}><path d="M1 0v12l7-6z" fill="#111" /></S></IconButton>
          <IconButton $w={26} aria-label="最后一页"><S w={14} h={12}><path d="M1 0v12l6-6zM7 0v12l6-6z" fill="#111" /></S></IconButton>
          <IconButton $w={26} aria-label="上一视图"><TableSwap /></IconButton>
          <IconButton $w={26} aria-label="下一视图"><TableSwap off /></IconButton>
        </StatusLeft>
        <Spacer />
        <IconButton $w={26} aria-label="单页"><ViewIcon kind="single" /></IconButton>
        <IconButton $h={20} $on aria-label="连续"><ViewIcon kind="scroll" /></IconButton>
        <IconButton $w={26} aria-label="双页"><ViewIcon kind="facing" /></IconButton>
        <IconButton $w={26} aria-label="连续双页"><ViewIcon kind="facingScroll" /></IconButton>
        <Row $pad={27}><Percent>100%</Percent></Row>
        <IconButton $w={12} aria-label="缩放比例"><Down /></IconButton>
        <IconButton $w={18} aria-label="缩小"><S><circle cx="8" cy="8" r="7" stroke="#444" /><path d="M4.500 8h7" stroke="#444" /></S></IconButton>
        <Zoom aria-label="缩放" defaultValue={50} />
        <IconButton $w={18} aria-label="放大"><S><circle cx="8" cy="8" r="7" stroke="#444" /><path d="M4.500 8h7M8 4.500v7" stroke="#444" /></S></IconButton>
        <Row $pad={117}><S w={13}><path d="M12 1L1 12M12 5l-7 7M12 9l-3 3" stroke="#777" /></S></Row>
        <Row $pad={5} />
      </StatusBar>

      <Pointer $x={187} $y={55} width="76" height="60"><path d="M5 51L19 31l4 6L68 5c2-1 4 1 2 3L25 41l5 6z" fill="#f00" /></Pointer>
      <Pointer $x={189} $y={289} width="46" height="86"><path d="M7 5l17 15-7 2 23 56c1 2-2 3-3 1L13 24l-6 4z" fill="#f00" /></Pointer>

      <Brand>
        <S w={42} h={42}>
          <path d="M40 3C20-2 0 14 1 28c1 4 6 8 14 7-9-4-8-12 0-19S30 6 40 3z" fill="#3a86cc" />
          <path d="M30 12c10 2 12 12 4 20-8 9-20 10-29 6 12 0 20-3 25-10 4-6 4-12 0-16z" fill="#41b763" />
          <path d="M5 38c7 2 14 1 19-2 5-2 8-6 8-10-4 6-12 11-27 12z" fill="#d8cf3a" />
          <path d="M13 23c3-8 14-9 14-2 0 5-6 6-9 4 3 1 6-1 5-4s-7-2-10 2z" fill="#3a86cc" />
        </S>
        <BrandName>极光下载站<small>www.xz7.com</small></BrandName>
      </Brand>
    </Window>
  );
}
